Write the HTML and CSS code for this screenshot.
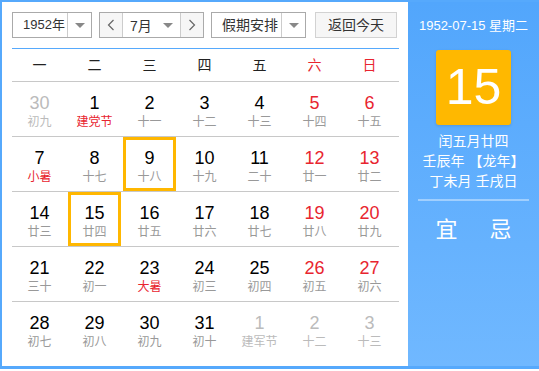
FILE: index.html
```html
<!DOCTYPE html>
<html lang="zh-CN">
<head>
  <meta charset="UTF-8" />
  <meta name="viewport" content="width=device-width, initial-scale=1.0"/>
  <title>万年历</title>

  <link rel="stylesheet" href="styles.css">
</head>

<body>
  <div class="calendar">

    <!-- 左侧：日历主体 -->
    <div class="main">
      <div class="toolbar">
        <div class="select year">
          <span class="select-text">1952年</span>
          <span class="select-arrow"><i class="caret"></i></span>
        </div>

        <div class="month-group">
          <span class="nav">
            <svg width="8" height="12" viewBox="0 0 8 12"><polyline points="6.5,1 1.5,6 6.5,11" fill="none" stroke="#666" stroke-width="1.2"/></svg>
          </span>
          <span class="month"><span>7月</span><i class="caret"></i></span>
          <span class="nav">
            <svg width="8" height="12" viewBox="0 0 8 12"><polyline points="1.5,1 6.5,6 1.5,11" fill="none" stroke="#666" stroke-width="1.2"/></svg>
          </span>
        </div>

        <div class="select holiday">
          <span class="select-text">假期安排</span>
          <span class="select-arrow"><i class="caret"></i></span>
        </div>

        <span class="today-btn">返回今天</span>
      </div>

      <div class="weekdays">
        <span>一</span><span>二</span><span>三</span><span>四</span><span>五</span>
        <span class="red">六</span><span class="red">日</span>
      </div>

      <div class="weeks">
        <div class="week">
          <div class="day other"><b>30</b><small>初九</small></div>
          <div class="day"><b>1</b><small class="fest">建党节</small></div>
          <div class="day"><b>2</b><small>十一</small></div>
          <div class="day"><b>3</b><small>十二</small></div>
          <div class="day"><b>4</b><small>十三</small></div>
          <div class="day weekend"><b>5</b><small>十四</small></div>
          <div class="day weekend"><b>6</b><small>十五</small></div>
        </div>
        <div class="week">
          <div class="day"><b>7</b><small class="fest">小暑</small></div>
          <div class="day"><b>8</b><small>十七</small></div>
          <div class="day marked"><b>9</b><small>十八</small></div>
          <div class="day"><b>10</b><small>十九</small></div>
          <div class="day"><b>11</b><small>二十</small></div>
          <div class="day weekend"><b>12</b><small>廿一</small></div>
          <div class="day weekend"><b>13</b><small>廿二</small></div>
        </div>
        <div class="week">
          <div class="day"><b>14</b><small>廿三</small></div>
          <div class="day marked"><b>15</b><small>廿四</small></div>
          <div class="day"><b>16</b><small>廿五</small></div>
          <div class="day"><b>17</b><small>廿六</small></div>
          <div class="day"><b>18</b><small>廿七</small></div>
          <div class="day weekend"><b>19</b><small>廿八</small></div>
          <div class="day weekend"><b>20</b><small>廿九</small></div>
        </div>
        <div class="week">
          <div class="day"><b>21</b><small>三十</small></div>
          <div class="day"><b>22</b><small>初一</small></div>
          <div class="day"><b>23</b><small class="fest">大暑</small></div>
          <div class="day"><b>24</b><small>初三</small></div>
          <div class="day"><b>25</b><small>初四</small></div>
          <div class="day weekend"><b>26</b><small>初五</small></div>
          <div class="day weekend"><b>27</b><small>初六</small></div>
        </div>
        <div class="week">
          <div class="day"><b>28</b><small>初七</small></div>
          <div class="day"><b>29</b><small>初八</small></div>
          <div class="day"><b>30</b><small>初九</small></div>
          <div class="day"><b>31</b><small>初十</small></div>
          <div class="day other"><b>1</b><small>建军节</small></div>
          <div class="day other"><b>2</b><small>十二</small></div>
          <div class="day other"><b>3</b><small>十三</small></div>
        </div>
      </div>
    </div>

    <!-- 右侧：当天详情 -->
    <div class="side">
      <div class="side-date">1952-07-15 星期二</div>
      <div class="big-day">15</div>
      <div class="lunar">
        <p>闰五月廿四</p>
        <p>壬辰年 【龙年】</p>
        <p>丁未月 壬戌日</p>
      </div>
      <div class="yiji">
        <span>宜</span>
        <span>忌</span>
      </div>
    </div>

  </div>
</body>
</html>
```

FILE: styles.css
```css
/* 万年历 */

body {
  margin: 0;
  background: #fff;
  font-family: "Liberation Sans", Arial, "Noto Sans CJK SC", sans-serif;
  color: #000;
}

.calendar {
  display: flex;
  width: 539px;
  height: 369px;
  box-sizing: border-box;
  border: 2px solid #56a9fc;
  border-right: 0;
  border-bottom-width: 3px;
}

/* 左侧 */

.main {
  width: 406px;
  background: #fff;
  padding: 10px 9px 0 10px;
  box-sizing: border-box;
}

.toolbar {
  display: flex;
  height: 26px;
  padding-bottom: 10px;
  border-bottom: 1px solid #56a9fc;
  font-size: 14px;
  color: #333;
}

.select {
  display: flex;
  box-sizing: border-box;
  border: 1px solid #aaa;
  height: 26px;
}

.select-text {
  flex: 1;
  padding-left: 10px;
  line-height: 24px;
  white-space: nowrap;
}

.year .select-text {
  font-size: 13px;
}

.select-arrow {
  width: 23px;
  border-left: 1px solid #ccc;
  display: flex;
  align-items: center;
  justify-content: center;
}

.caret {
  width: 0;
  height: 0;
  border-left: 5px solid transparent;
  border-right: 5px solid transparent;
  border-top: 5px solid #888;
}

.year {
  width: 80px;
  margin-right: 7px;
}

.holiday {
  width: 95px;
  margin-right: 9px;
}

.month-group {
  display: flex;
  width: 105px;
  height: 26px;
  box-sizing: border-box;
  border: 1px solid #aaa;
  margin-right: 7px;
}

.nav {
  width: 22px;
  background: #f6f6f6;
  display: flex;
  align-items: center;
  justify-content: center;
}

.month {
  flex: 1;
  display: flex;
  align-items: center;
  justify-content: space-between;
  padding: 0 7px 0 7px;
  border-left: 1px solid #ccc;
  border-right: 1px solid #ccc;
}

.today-btn {
  width: 82px;
  height: 26px;
  box-sizing: border-box;
  border: 1px solid #d2d2d2;
  background: #f6f6f6;
  text-align: center;
  line-height: 24px;
}

.weekdays {
  display: grid;
  grid-template-columns: repeat(7, 55px);
  height: 32px;
  line-height: 32px;
  border-bottom: 1px solid #c8c8c8;
  text-align: center;
  font-size: 14px;
  color: #222;
}

.red {
  color: #e8252f;
}

.week {
  display: grid;
  grid-template-columns: repeat(7, 55px);
  height: 54px;
  border-bottom: 1px solid #c8c8c8;
}

.week:last-child {
  border-bottom: 0;
}

.day {
  margin: 0 1px;
  border: 3px solid transparent;
  padding-top: 8px;
  display: flex;
  flex-direction: column;
  align-items: center;
}

.day b {
  font-weight: normal;
  font-size: 18px;
  line-height: 20px;
  color: #000;
}

.day small {
  font-size: 12px;
  line-height: 16px;
  margin-top: 1px;
  color: #999;
}

.day.weekend b {
  color: #e8252f;
}

.day small.fest {
  color: #e8252f;
}

.day.other b,
.day.other small {
  color: #bbb;
}

.day.marked {
  border-color: #ffb700;
}

/* 右侧 */

.side {
  flex: 1;
  background: linear-gradient(#52a6fc, #70b8ff);
  color: #fff;
  text-align: center;
}

.side-date {
  font-size: 13px;
  margin-top: 16px;
  line-height: 16px;
}

.big-day {
  width: 75px;
  height: 75px;
  margin: 16px auto 0;
  background: #ffb800;
  border-radius: 3px;
  box-shadow: 0 1px 3px rgba(0,0,0,0.12);
  font-size: 50px;
  line-height: 75px;
}

.lunar {
  font-size: 14px;
  line-height: 20px;
  padding-bottom: 8px;
  margin: 6px 10px 0 10px;
  border-bottom: 2px solid rgba(255,255,255,0.4);
}

.lunar p {
  margin: 0;
}

.yiji {
  display: flex;
  justify-content: center;
  gap: 32px;
  margin-top: 10px;
  font-size: 22px;
}
```
